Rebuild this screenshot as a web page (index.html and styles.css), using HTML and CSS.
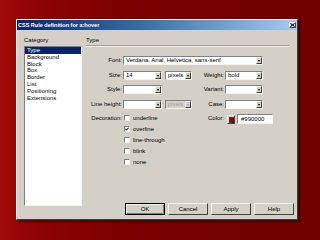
FILE: index.html
```html
<!DOCTYPE html>
<html lang="en">

<head>
    <meta charset="UTF-8">
    <title>CSS Rule definition for a:hover</title>
    <link rel="stylesheet" href="styles.css">
</head>

<body>

    <div class="dialog">
        <div class="titlebar">
            <span class="title">CSS Rule definition for a:hover</span>
            <span class="close">
                <svg width="5" height="4" viewBox="0 0 5 4"><path d="M0.5 0.5 L4.5 3.5 M4.5 0.5 L0.5 3.5" stroke="#000" stroke-width="1"/></svg>
            </span>
        </div>

        <div class="content">
            <div class="sidebar">
                <div class="caption">Category</div>
                <ul class="listbox">
                    <li class="selected">Type</li>
                    <li>Background</li>
                    <li>Block</li>
                    <li>Box</li>
                    <li>Border</li>
                    <li>List</li>
                    <li>Positioning</li>
                    <li>Extensions</li>
                </ul>
            </div>

            <div class="main">
                <div class="caption">Type</div>
                <div class="separator"></div>

                <div class="form">
                    <label class="lbl">Font:</label>
                    <div class="select wide"><span>Verdana, Arial, Helvetica, sans-serif</span><i class="arrow"></i></div>

                    <label class="lbl">Size:</label>
                    <div class="pair">
                        <div class="select size"><span>14</span><i class="arrow"></i></div>
                        <div class="select unit"><span>pixels</span><i class="arrow"></i></div>
                    </div>
                    <label class="lbl">Weight:</label>
                    <div class="select side"><span>bold</span><i class="arrow"></i></div>

                    <label class="lbl">Style:</label>
                    <div class="pair">
                        <div class="select size"><span></span><i class="arrow"></i></div>
                    </div>
                    <label class="lbl">Variant:</label>
                    <div class="select side"><span></span><i class="arrow"></i></div>

                    <label class="lbl">Line height:</label>
                    <div class="pair">
                        <div class="select size"><span></span><i class="arrow"></i></div>
                        <div class="select unit disabled"><span>pixels</span><i class="arrow"></i></div>
                    </div>
                    <label class="lbl">Case:</label>
                    <div class="select side"><span></span><i class="arrow"></i></div>

                    <label class="lbl top">Decoration:</label>
                    <div class="checks">
                        <div class="check"><span class="box"></span>underline</div>
                        <div class="check"><span class="box"><svg width="4" height="4" viewBox="0 0 4 4"><path d="M0.3 1.8 L1.5 3.2 L3.7 0.6" fill="none" stroke="#000" stroke-width="1"/></svg></span>overline</div>
                        <div class="check"><span class="box"></span>line-through</div>
                        <div class="check"><span class="box"></span>blink</div>
                        <div class="check"><span class="box"></span>none</div>
                    </div>
                    <label class="lbl top">Color:</label>
                    <div class="color">
                        <span class="swatch"><i class="chip"></i><i class="mini"></i></span>
                        <span class="field">#990000</span>
                    </div>
                </div>

                <div class="buttons">
                    <button class="btn default">OK</button>
                    <button class="btn">Cancel</button>
                    <button class="btn">Apply</button>
                    <button class="btn">Help</button>
                </div>
            </div>
        </div>
    </div>

</body>

</html>
```

FILE: styles.css
```css
html,
body {
    margin: 0;
    width: 320px;
    height: 240px;
    overflow: hidden;
}

body {
    background: linear-gradient(to right, #a00a0a 0%, #8a0202 15%, #780000 45%, #700000 100%);
    font-family: 'Liberation Sans', Arial, sans-serif;
    font-size: 6px;
    color: #000000;
    padding: 19px 0 0 16px;
    box-sizing: border-box;
}

.dialog {
    width: 282px;
    height: 201px;
    box-sizing: border-box;
    background-color: #d4d0c8;
    border: 1px solid;
    border-color: #f4f2ee #404040 #404040 #f4f2ee;
    box-shadow: 2px 2px 2px rgba(0, 0, 0, 0.45);
    display: flex;
    flex-direction: column;
}

.titlebar {
    height: 10px;
    margin: 0 0 0 0;
    background: linear-gradient(to right, #0a246a 0%, #3a6ea5 45%, #a6caf0 100%);
    display: flex;
    align-items: center;
    justify-content: space-between;
    padding: 0 1px 0 1px;
}

.title {
    color: #ffffff;
    font-weight: bold;
    font-size: 5.5px;
    line-height: 10px;
}

.close {
    width: 7px;
    height: 6px;
    box-sizing: border-box;
    background-color: #d4d0c8;
    border: 1px solid;
    border-color: #ffffff #404040 #404040 #ffffff;
    display: flex;
    align-items: center;
    justify-content: center;
}

.close svg {
    display: block;
}

.content {
    flex: 1;
    display: flex;
    padding: 7px 3px 4px 7px;
}

.caption {
    height: 6px;
    line-height: 6px;
}

/* category list */
.sidebar {
    width: 58px;
}

.listbox {
    list-style: none;
    margin: 3px 0 0 0;
    padding: 0;
    height: 160px;
    box-sizing: border-box;
    background-color: #ffffff;
    border: 1px solid;
    border-color: #808080 #f4f2ee #f4f2ee #808080;
}

.listbox li {
    height: 6.8px;
    line-height: 6.8px;
    padding-left: 2px;
}

.listbox li.selected {
    background-color: #0a246a;
    color: #ffffff;
}

/* type panel */
.main {
    flex: 1;
    margin-left: 4px;
    display: flex;
    flex-direction: column;
}

.separator {
    margin: 2px 5px 0 0;
    height: 1px;
    background-color: #a09c94;
    border-bottom: 1px solid #f4f2ee;
}

.form {
    margin-top: 9px;
    display: grid;
    grid-template-columns: 37px 69px 33px 1fr;
    grid-auto-rows: auto;
    row-gap: 5.5px;
    align-items: center;
}

.lbl {
    text-align: right;
    padding-right: 1px;
    white-space: nowrap;
    line-height: 9px;
}

.lbl.top {
    align-self: start;
    line-height: 8px;
}

.pair {
    display: flex;
    gap: 3px;
    height: 9px;
}

.select {
    height: 9px;
    box-sizing: border-box;
    background-color: #ffffff;
    border: 1px solid;
    border-color: #808080 #f4f2ee #f4f2ee #808080;
    display: flex;
    align-items: stretch;
}

.select span {
    flex: 1;
    padding-left: 2px;
    line-height: 7px;
    white-space: nowrap;
    overflow: hidden;
}

.select .arrow {
    width: 6px;
    box-sizing: border-box;
    background-color: #d4d0c8;
    border: 1px solid;
    border-color: #f4f2ee #404040 #404040 #f4f2ee;
    position: relative;
}

.select .arrow::after {
    content: "";
    position: absolute;
    left: 0.5px;
    top: 2px;
    border-left: 1.5px solid transparent;
    border-right: 1.5px solid transparent;
    border-top: 2px solid #000000;
}

.wide {
    grid-column: 2 / 5;
    width: 140px;
}

.size {
    width: 39px;
}

.unit {
    width: 27px;
}

.side {
    width: 38px;
}

.disabled {
    background-color: #d4d0c8;
    color: #a09c94;
}

.disabled .arrow::after {
    border-top-color: #a09c94;
}

.checks {
    display: flex;
    flex-direction: column;
    gap: 5px;
    padding-top: 1px;
}

.check {
    display: flex;
    align-items: center;
    gap: 3px;
    height: 6px;
    line-height: 6px;
    padding-left: 1px;
}

.box {
    width: 6px;
    height: 6px;
    box-sizing: border-box;
    background-color: #ffffff;
    border: 1px solid;
    border-color: #808080 #f4f2ee #f4f2ee #808080;
    display: flex;
    align-items: center;
    justify-content: center;
}

.box svg {
    display: block;
}

.color {
    align-self: start;
    display: flex;
    align-items: center;
    gap: 2px;
    padding-left: 2px;
}

.swatch {
    width: 8px;
    height: 9px;
    box-sizing: border-box;
    background-color: #d4d0c8;
    border: 1px solid;
    border-color: #f4f2ee #404040 #404040 #f4f2ee;
    position: relative;
}

.swatch .chip {
    position: absolute;
    left: 1px;
    top: 1px;
    width: 4px;
    height: 4px;
    background-color: #990000;
    border: 0.5px solid #404040;
}

.swatch .mini {
    position: absolute;
    right: 0;
    bottom: 0;
    border-left: 1.5px solid transparent;
    border-right: 1.5px solid transparent;
    border-top: 1.5px solid #000000;
}

.field {
    width: 36px;
    height: 10px;
    box-sizing: border-box;
    background-color: #ffffff;
    border: 1px solid;
    border-color: #808080 #f4f2ee #f4f2ee #808080;
    padding-left: 3px;
    line-height: 8px;
}

.buttons {
    margin-top: auto;
    display: flex;
    justify-content: flex-end;
    gap: 3px;
}

.btn {
    width: 40px;
    height: 12px;
    box-sizing: border-box;
    padding: 0;
    font-family: 'Liberation Sans', Arial, sans-serif;
    font-size: 6px;
    color: #000000;
    background-color: #d4d0c8;
    border: 1px solid;
    border-color: #f4f2ee #404040 #404040 #f4f2ee;
}

.btn.default {
    outline: 1px solid #000000;
    outline-offset: -1px;
    border-color: #000000;
    box-shadow: inset 1px 1px 0 #f4f2ee, inset -1px -1px 0 #808080;
}
```
